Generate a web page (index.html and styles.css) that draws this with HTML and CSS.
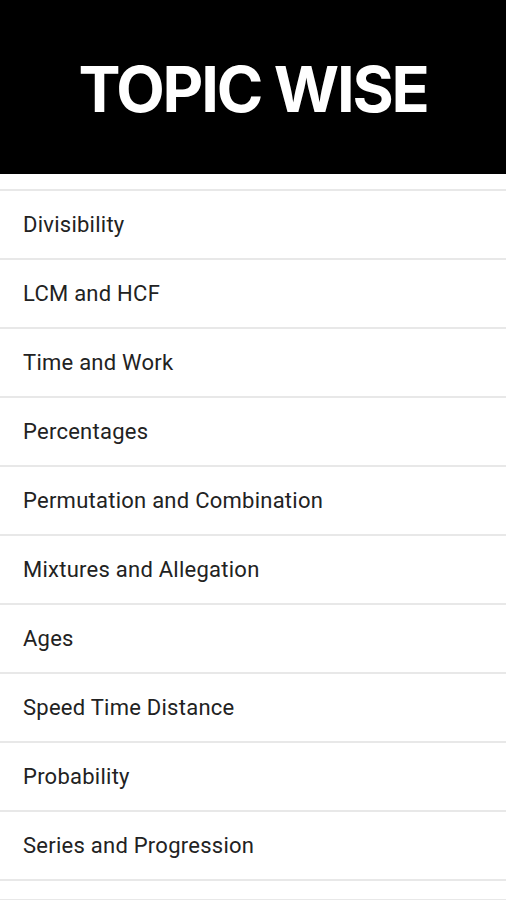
FILE: index.html
```html
<!DOCTYPE html>
<html>
<head>
<meta charset="utf-8">
<link rel="stylesheet" href="styles.css">
</head>
<body>
<header class="top"><h1 class="title">TOPIC WISE</h1></header>
<ul class="topics">
<li class="topic">Divisibility</li>
<li class="topic">LCM and HCF</li>
<li class="topic">Time and Work</li>
<li class="topic">Percentages</li>
<li class="topic">Permutation and Combination</li>
<li class="topic">Mixtures and Allegation</li>
<li class="topic">Ages</li>
<li class="topic">Speed Time Distance</li>
<li class="topic">Probability</li>
<li class="topic">Series and Progression</li>
<li class="topic topic-end"></li>
</ul>
</body>
</html>
```
FILE: styles.css
```css
html, body { margin: 0; padding: 0; background: #fff; }
body { width: 506px; height: 900px; overflow: hidden; font-family: Roboto, "Liberation Sans", sans-serif; }
.top { height: 174px; background: #000; display: flex; align-items: center; justify-content: center; }
.title { margin: 0; color: #fff; font-family: Inter, "Liberation Sans", sans-serif; font-weight: 700; font-size: 63px; letter-spacing: -2.2px; line-height: 1; padding-top: 4px; }
.topics { list-style: none; margin: 15px 0 0; padding: 0; }
.topic { height: 67px; border-top: 2px solid #e8e8e8; display: flex; align-items: center; padding-left: 23px; font-size: 22px; color: #222; letter-spacing: 0.25px; }
.topic-end { height: 18px; border-bottom: 2px solid #e8e8e8; }
```
